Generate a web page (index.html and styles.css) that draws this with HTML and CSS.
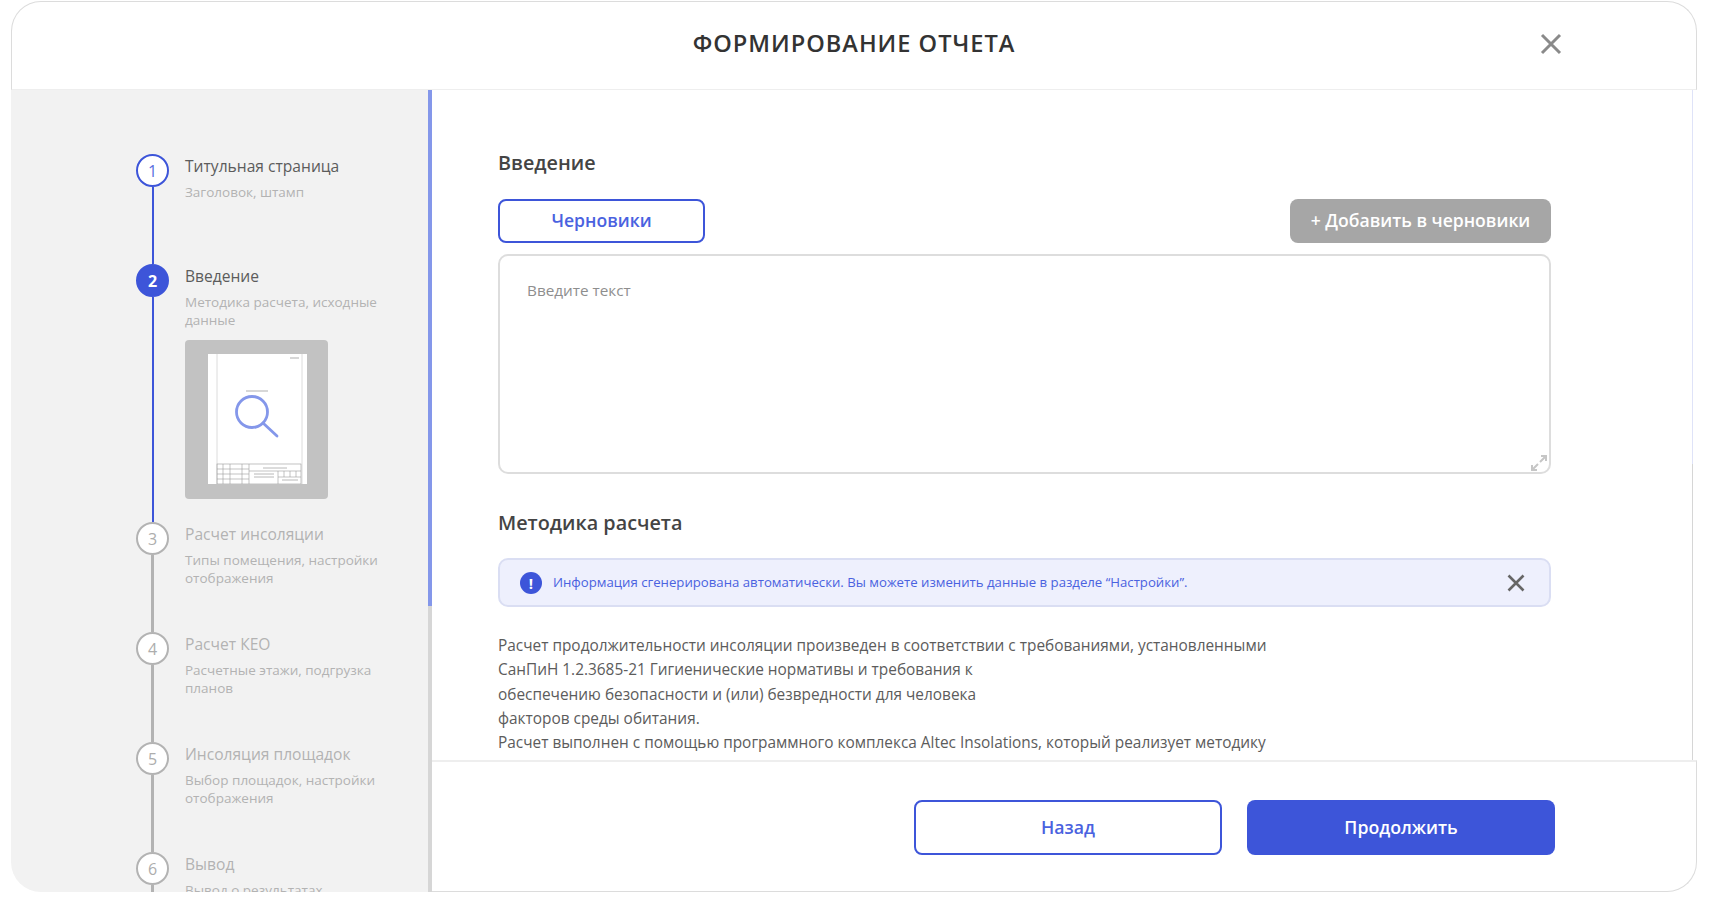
FILE: index.html
```html
<!DOCTYPE html>
<html lang="ru">
<head>
    <meta charset="UTF-8">
    <meta name="viewport" content="width=device-width, initial-scale=1.0">
    <title>Формирование отчета</title>
    <link rel="stylesheet" href="styles.css">
</head>
<body>
    <div class="modal">
        <header class="modal-head">
            <h1 class="modal-title">ФОРМИРОВАНИЕ ОТЧЕТА</h1>
            <button class="modal-close" aria-label="Закрыть">
                <svg width="22" height="22" viewBox="0 0 22 22"><path d="M2 2 L20 20 M20 2 L2 20" stroke="#8a8a8a" stroke-width="3" fill="none"/></svg>
            </button>
        </header>

        <div class="modal-body">
            <aside class="side">
                <ol class="steps">
                    <li class="step step-done">
                        <div class="rail"><span class="dot">1</span><span class="line"></span></div>
                        <div class="step-text">
                            <div class="step-name">Титульная страница</div>
                            <div class="step-sub">Заголовок, штамп</div>
                        </div>
                    </li>
                    <li class="step step-current">
                        <div class="rail"><span class="dot">2</span><span class="line"></span></div>
                        <div class="step-text">
                            <div class="step-name">Введение</div>
                            <div class="step-sub">Методика расчета, исходные данные</div>
                            <div class="thumb">
                                <svg class="thumb-page" width="99" height="130" viewBox="0 0 99 130">
                                    <rect width="99" height="130" fill="#fff"/>
                                    <path d="M9 0 V130 M94 0 V130" stroke="#dcdcdc" stroke-width="1" fill="none"/>
                                    <path d="M82 4 H91 M38 37 H60" stroke="#b0b0b0" stroke-width="1.2" fill="none"/>
                                    <circle cx="44" cy="58" r="15.5" fill="none" stroke="#8497ea" stroke-width="2.8"/>
                                    <path d="M55 69 L69 82" stroke="#8497ea" stroke-width="2.8" stroke-linecap="round" fill="none"/>
                                    <g stroke="#9a9a9a" stroke-width="0.6" fill="none">
                                        <rect x="9" y="110" width="84" height="20"/>
                                        <path d="M41 110 V130 M9 115 H41 M9 120 H41 M9 125 H41 M15 110 V130 M22 110 V130 M34 110 V130 M41 117 H93 M70 117 V130 M70 123 H93 M76 117 V123 M82 117 V123 M88 117 V123"/>
                                    </g>
                                    <path d="M55 114 H79 M46 120 H66 M46 123 H66 M74 126 H90" stroke="#b8b8b8" stroke-width="1" fill="none"/>
                                </svg>
                            </div>
                        </div>
                    </li>
                    <li class="step">
                        <div class="rail"><span class="dot">3</span><span class="line"></span></div>
                        <div class="step-text">
                            <div class="step-name">Расчет инсоляции</div>
                            <div class="step-sub">Типы помещения, настройки отображения</div>
                        </div>
                    </li>
                    <li class="step">
                        <div class="rail"><span class="dot">4</span><span class="line"></span></div>
                        <div class="step-text">
                            <div class="step-name">Расчет КЕО</div>
                            <div class="step-sub">Расчетные этажи, подгрузка планов</div>
                        </div>
                    </li>
                    <li class="step">
                        <div class="rail"><span class="dot">5</span><span class="line"></span></div>
                        <div class="step-text">
                            <div class="step-name">Инсоляция площадок</div>
                            <div class="step-sub">Выбор площадок, настройки отображения</div>
                        </div>
                    </li>
                    <li class="step">
                        <div class="rail"><span class="dot">6</span><span class="line"></span></div>
                        <div class="step-text">
                            <div class="step-name">Вывод</div>
                            <div class="step-sub">Вывод о результатах</div>
                        </div>
                    </li>
                </ol>
                <div class="side-bar"><div class="side-bar-thumb"></div></div>
            </aside>

            <main class="main">
                <div class="main-scroll">
                    <section class="content">
                        <h2 class="section-title">Введение</h2>
                        <div class="draft-row">
                            <button class="btn-drafts">Черновики</button>
                            <button class="btn-add">+ Добавить в черновики</button>
                        </div>
                        <div class="textbox">
                            <span class="placeholder">Введите текст</span>
                            <svg class="resize" width="18" height="18" viewBox="0 0 18 18"><path d="M11 2 H16 V7 M16 2 L10 8 M2 11 V16 H7 M2 16 L8 10" stroke="#c6c6c6" stroke-width="2" fill="none"/></svg>
                        </div>

                        <h2 class="section-title method-title">Методика расчета</h2>
                        <div class="notice">
                            <span class="notice-icon">!</span>
                            <span class="notice-text">Информация сгенерирована автоматически. Вы можете изменить данные в разделе “Настройки”.</span>
                            <svg class="notice-close" width="18" height="18" viewBox="0 0 18 18"><path d="M1.5 1.5 L16.5 16.5 M16.5 1.5 L1.5 16.5" stroke="#666" stroke-width="2.6" fill="none"/></svg>
                        </div>
                        <p class="report-text">
                            Расчет продолжительности инсоляции произведен в соответствии с требованиями, установленными<br>
                            СанПиН 1.2.3685-21 Гигиенические нормативы и требования к<br>
                            обеспечению безопасности и (или) безвредности для человека<br>
                            факторов среды обитания.<br>
                            Расчет выполнен с помощью программного комплекса Altec Insolations, который реализует методику
                        </p>
                    </section>
                    <div class="main-bar"><div class="main-bar-thumb"></div></div>
                </div>
                <footer class="main-foot">
                    <button class="btn-back">Назад</button>
                    <button class="btn-next">Продолжить</button>
                </footer>
            </main>
        </div>
    </div>
</body>
</html>
```

FILE: styles.css
```css
* {
    box-sizing: border-box;
}

html, body {
    height: 100%;
    margin: 0;
    background: #fff;
    overflow: hidden;
}

body {
    padding: 1px 25px 20px 11px;
    font-family: "Open Sans", "Noto Sans", sans-serif;
    color: #444;
}

button {
    font-family: inherit;
    cursor: pointer;
}

.modal {
    height: 891px;
    display: flex;
    flex-direction: column;
    background: #fff;
}

.modal-head {
    flex: none;
    height: 89px;
    position: relative;
    display: flex;
    align-items: center;
    justify-content: center;
    border: 1px solid #dcdcdc;
    border-bottom-color: #eee;
    border-radius: 30px 30px 0 0;
}

.modal-title {
    margin: 0 0 6px;
    font-size: 23.6px;
    font-weight: 600;
    letter-spacing: 1px;
    color: #333;
}

.modal-close {
    position: absolute;
    top: 31px;
    right: 134px;
    width: 22px;
    height: 22px;
    padding: 0;
    border: 0;
    background: none;
}

.modal-body {
    flex: 1;
    min-height: 0;
    display: flex;
}

/* левая колонка */
.side {
    flex: none;
    width: 421px;
    display: flex;
    overflow: hidden;
    background: #f2f2f2;
    border-radius: 0 0 0 30px;
}

.side-bar {
    flex: none;
    width: 4px;
    background: #d6d6d6;
}

.side-bar-thumb {
    height: 516px;
    background: #8497ea;
}

.steps {
    flex: 1;
    list-style: none;
    margin: 0;
    padding: 64px 0 0 125px;
}

.step {
    display: flex;
    gap: 16px;
    height: 110px;
}

.step-current {
    height: 258px;
}

.rail {
    flex: none;
    width: 33px;
    display: flex;
    flex-direction: column;
    align-items: center;
}

.dot {
    flex: none;
    width: 33px;
    height: 33px;
    display: flex;
    align-items: center;
    justify-content: center;
    border: 2.5px solid #b3b3b3;
    border-radius: 50%;
    background: #fff;
    font-size: 16px;
    color: #adadad;
}

.line {
    flex: 1;
    width: 2.5px;
    background: #b3b3b3;
}

.step-text {
    width: 212px;
}

.step-name {
    margin-top: 2px;
    font-size: 15.6px;
    line-height: 21px;
    color: #b3b3b3;
}

.step-sub {
    margin-top: 7px;
    font-size: 13.5px;
    line-height: 17.5px;
    color: #b3b3b3;
}

.step-done .dot {
    border-color: #3d55d9;
    color: #5a70e0;
}

.step-done .line,
.step-current .line {
    width: 2px;
    background: #3d55d9;
}

.step-current .dot {
    border-color: #3d55d9;
    background: #3d55d9;
    color: #fff;
    font-weight: 700;
}

.step-done .step-name,
.step-current .step-name {
    color: #5c5c5c;
}

.thumb {
    width: 143px;
    height: 159px;
    margin-top: 11px;
    padding: 14px 0 0 23px;
    border-radius: 4px;
    background: #c2c2c2;
}

.thumb-page {
    display: block;
    filter: blur(0.4px);
}

/* правая колонка */
.main {
    flex: 1;
    min-width: 0;
    display: flex;
    flex-direction: column;
}

.main-scroll {
    flex: 1;
    min-height: 0;
    display: flex;
    padding-right: 4px;
    overflow: hidden;
}

.content {
    flex: 1;
    min-width: 0;
    padding: 59px 141px 0 66px;
}

.main-bar {
    flex: none;
    width: 1px;
    background: #d6d6d6;
}

.main-bar-thumb {
    height: 374px;
    background: #dfe3f8;
}

.section-title {
    margin: 0;
    font-size: 19.8px;
    font-weight: 600;
    line-height: 27px;
    color: #444;
}

.draft-row {
    display: flex;
    justify-content: space-between;
    margin-top: 23px;
}

.btn-drafts {
    width: 207px;
    height: 44px;
    padding: 0 0 2px;
    border: 2px solid #3d55d9;
    border-radius: 8px;
    background: #fff;
    font-size: 17.6px;
    font-weight: 600;
    color: #4a62e0;
}

.btn-add {
    width: 261px;
    height: 44px;
    padding: 0 0 2px;
    border: 0;
    border-radius: 8px;
    background: #a6a6a6;
    font-size: 17.6px;
    font-weight: 600;
    color: #fff;
}

.textbox {
    position: relative;
    height: 220px;
    margin-top: 11px;
    padding: 23px 27px;
    border: 2px solid #ddd;
    border-radius: 10px;
}

.placeholder {
    font-size: 15.3px;
    color: #8e8e8e;
}

.resize {
    position: absolute;
    right: 1px;
    bottom: 0;
}

.method-title {
    margin-top: 35px;
}

.notice {
    height: 49px;
    margin-top: 22px;
    padding: 0 24px 0 20px;
    display: flex;
    align-items: center;
    border: 2px solid #dadef3;
    border-radius: 10px;
    background: #eef0fd;
}

.notice-icon {
    flex: none;
    width: 22px;
    height: 22px;
    border-radius: 50%;
    background: #3d55d9;
    color: #fff;
    font-size: 15px;
    font-weight: 700;
    line-height: 22px;
    text-align: center;
}

.notice-text {
    flex: 1;
    margin-left: 11px;
    padding-bottom: 2px;
    font-size: 13.2px;
    color: #4a62e0;
}

.report-text {
    margin: 27px 0 0;
    font-size: 15.4px;
    line-height: 24.3px;
    color: #5c5c5c;
    white-space: nowrap;
}

.main-foot {
    flex: none;
    height: 132px;
    display: flex;
    justify-content: flex-end;
    gap: 25px;
    padding: 38px 141px 0 0;
    border-top: 2px solid #eee;
    border-right: 1px solid #dcdcdc;
    border-bottom: 1px solid #dcdcdc;
    border-radius: 0 0 30px 0;
}

.btn-back,
.btn-next {
    width: 308px;
    height: 55px;
    padding: 0 0 2px;
    border-radius: 8px;
    font-size: 17.7px;
    font-weight: 600;
}

.btn-back {
    border: 2px solid #3d55d9;
    background: #fff;
    color: #4a62e0;
}

.btn-next {
    border: 0;
    background: #3d55d9;
    color: #fff;
}
```
